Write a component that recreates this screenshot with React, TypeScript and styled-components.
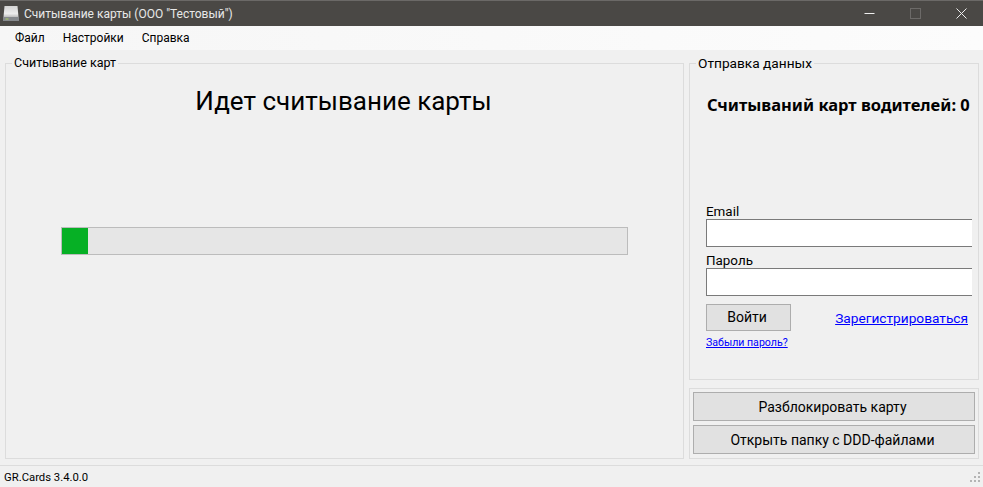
import React from "react";
import styled, { createGlobalStyle } from "styled-components";

const Global = createGlobalStyle`
  html, body { margin: 0; padding: 0; background: #f0f0f0; }
  * { box-sizing: border-box; }
`;

const Window = styled.div`
  width: 983px;
  height: 487px;
  display: flex;
  flex-direction: column;
  overflow: hidden;
  background: #f0f0f0;
  color: #000;
  font-family: "Roboto", "Noto Sans", sans-serif;
  font-size: 12px;
`;

const TitleBar = styled.header`
  height: 26px;
  flex: none;
  display: flex;
  align-items: center;
  padding-left: 3px;
  background: #4a4845;
  border-top: 1px solid #6b6967;
  color: #e8e8e8;
`;

const TitleText = styled.span`
  margin-left: 5px;
  font-size: 12px;
  white-space: nowrap;
`;

const WindowButtons = styled.div`
  margin-left: auto;
  margin-right: -1px;
  display: flex;
  height: 100%;
`;

const WindowButton = styled.div`
  width: 46px;
  display: flex;
  align-items: center;
  justify-content: center;
`;

const MenuBar = styled.nav`
  height: 24px;
  flex: none;
  display: flex;
  align-items: center;
  padding-left: 15px;
  gap: 18px;
  background: linear-gradient(90deg, #f6f6f6, #fcfcfc);
  font-size: 12px;
`;

const Main = styled.main`
  flex: 1;
  min-height: 0;
  display: flex;
  gap: 5px;
  padding: 5px 4px 6px 5px;
`;

const Group = styled.fieldset`
  margin: 0;
  padding: 0;
  min-width: 0;
  border: 1px solid #dcdcdc;
  display: flex;
  flex-direction: column;
`;

const Legend = styled.legend<{ $size: number }>`
  margin-left: 6px;
  padding: 0 2px;
  font-size: ${(p) => p.$size}px;
  line-height: 16px;
`;

const ReadingGroup = styled(Group)`
  width: 679px;
  flex: none;
  align-items: flex-start;
`;

const Heading = styled.h1`
  margin: 12px 0 0;
  width: 100%;
  padding-right: 2px;
  text-align: center;
  font-size: 26px;
  line-height: 36px;
  font-weight: 400;
`;

const ProgressTrack = styled.div`
  margin: 108px 0 0 55px;
  width: 567px;
  height: 28px;
  background: #e6e6e6;
  border: 1px solid #bcbcbc;
`;

const ProgressFill = styled.div`
  height: 100%;
  background: #06b025;
`;

const SideColumn = styled.div`
  width: 290px;
  flex: none;
  display: flex;
  flex-direction: column;
  gap: 8px;
`;

const SendGroup = styled(Group)`
  height: 325px;
  flex: none;
`;

const SendBody = styled.div`
  padding-left: 16px;
`;

const Counter = styled.div`
  margin: 22px 0 0 1px;
  font-family: "Noto Sans", sans-serif;
  font-size: 16.5px;
  line-height: 24px;
  font-weight: 700;
  white-space: nowrap;
`;

const FieldLabel = styled.label`
  display: block;
  font-size: 13.4px;
  line-height: 15px;
`;

const EmailLabel = styled(FieldLabel)`
  margin-top: 87px;
`;

const PasswordLabel = styled(FieldLabel)`
  margin-top: 6px;
`;

const Input = styled.input`
  display: block;
  width: 266px;
  height: 28px;
  padding: 0 4px;
  margin-top: 0;
  border: 1px solid #7a7a7a;
  border-right: none;
  background: #fff;
  border-radius: 0;
  outline: none;
`;

const ActionRow = styled.div`
  margin-top: 8px;
  display: flex;
  align-items: flex-start;
  justify-content: space-between;
  width: 262px;
`;

const Button = styled.button`
  background: #e1e1e1;
  border: 1px solid #adadad;
  border-radius: 0;
  padding: 0;
  font-family: inherit;
  font-size: 14px;
  color: #000;
`;

const LoginButton = styled(Button)`
  width: 85px;
  height: 27px;
  padding: 0 3px 2px 0;
`;

const RegisterLink = styled.a`
  margin-top: 5px;
  color: #0000ff;
  font-size: 13.7px;
  line-height: 18px;
  text-decoration: underline;
`;

const ForgotLink = styled.a`
  display: block;
  margin-top: 4px;
  color: #0000ff;
  font-size: 10.6px;
  line-height: 15px;
  text-decoration: underline;
`;

const ButtonsPanel = styled.div`
  flex: 1;
  display: flex;
  flex-direction: column;
  gap: 4px;
  padding: 3px 3px;
  border: 1px solid #dcdcdc;
`;

const WideButton = styled(Button)`
  height: 29px;
  flex: none;
  padding-right: 3px;
`;

const StatusBar = styled.footer`
  height: 22px;
  flex: none;
  display: flex;
  align-items: center;
  justify-content: space-between;
  padding: 1px 2px 0 4px;
  border-top: 1px solid #dcdcdc;
  font-size: 11.3px;
`;

const DriveIcon = () => (
  <svg width="16" height="17" viewBox="0 0 16 17">
    <defs>
      <linearGradient id="drive" x1="0" y1="0" x2="0" y2="1">
        <stop offset="0" stopColor="#d4d4d4" />
        <stop offset="0.7" stopColor="#ececec" />
        <stop offset="1" stopColor="#bdbdbd" />
      </linearGradient>
    </defs>
    <path d="M1.5 1h13l1 11H0.5z" fill="url(#drive)" />
    <rect x="0" y="12" width="16" height="4" fill="#86898d" />
    <rect x="2.5" y="13.5" width="3" height="1" fill="#a8d060" />
  </svg>
);

const Grip = () => (
  <svg width="11" height="11" viewBox="0 0 11 11" fill="#b4b4b4">
    <rect x="8" y="0" width="2" height="2" />
    <rect x="4" y="4" width="2" height="2" />
    <rect x="8" y="4" width="2" height="2" />
    <rect x="0" y="8" width="2" height="2" />
    <rect x="4" y="8" width="2" height="2" />
    <rect x="8" y="8" width="2" height="2" />
  </svg>
);

export default function App() {
  return (
    <>
      <Global />
      <Window>
        <TitleBar>
          <DriveIcon />
          <TitleText>Считывание карты (ООО "Тестовый")</TitleText>
          <WindowButtons>
            <WindowButton>
              <svg width="11" height="11" viewBox="0 0 11 11">
                <path d="M0.5 5.5h10" stroke="#eee" strokeWidth="1" />
              </svg>
            </WindowButton>
            <WindowButton>
              <svg width="11" height="11" viewBox="0 0 11 11">
                <rect x="0.5" y="0.5" width="10" height="10" fill="none" stroke="#6c6a68" />
              </svg>
            </WindowButton>
            <WindowButton>
              <svg width="11" height="11" viewBox="0 0 11 11">
                <path d="M0.5 0.5l10 10M10.5 0.5l-10 10" stroke="#eee" strokeWidth="1" />
              </svg>
            </WindowButton>
          </WindowButtons>
        </TitleBar>
        <MenuBar>
          <span>Файл</span>
          <span>Настройки</span>
          <span>Справка</span>
        </MenuBar>
        <Main>
          <ReadingGroup>
            <Legend $size={12.5}>Считывание карт</Legend>
            <Heading>Идет считывание карты</Heading>
            <ProgressTrack>
              <ProgressFill style={{ width: `${(26 / 565) * 100}%` }} />
            </ProgressTrack>
          </ReadingGroup>
          <SideColumn>
            <SendGroup>
              <Legend $size={13.7}>Отправка данных</Legend>
              <SendBody>
                <Counter>Считываний карт водителей: 0</Counter>
                <EmailLabel>Email</EmailLabel>
                <Input />
                <PasswordLabel>Пароль</PasswordLabel>
                <Input />
                <ActionRow>
                  <LoginButton>Войти</LoginButton>
                  <RegisterLink>Зарегистрироваться</RegisterLink>
                </ActionRow>
                <ForgotLink>Забыли пароль?</ForgotLink>
              </SendBody>
            </SendGroup>
            <ButtonsPanel>
              <WideButton>Разблокировать карту</WideButton>
              <WideButton>Открыть папку с DDD-файлами</WideButton>
            </ButtonsPanel>
          </SideColumn>
        </Main>
        <StatusBar>
          <span>GR.Cards 3.4.0.0</span>
          <Grip />
        </StatusBar>
      </Window>
    </>
  );
}
